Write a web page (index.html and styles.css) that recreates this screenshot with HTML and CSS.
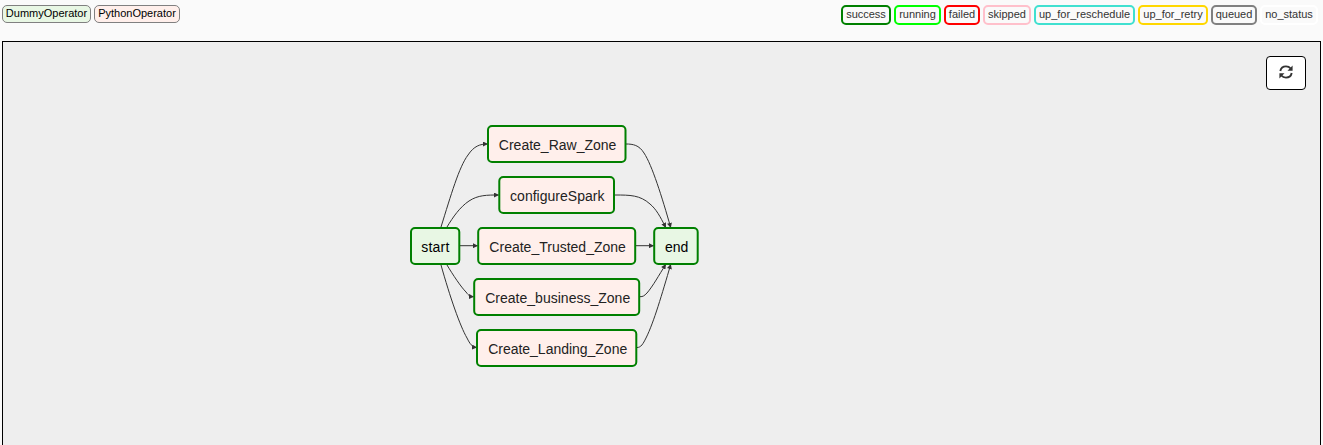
FILE: index.html
```html
<!DOCTYPE html>
<html lang="en">
<head>
<meta charset="utf-8">
<title>Graph View</title>
<link rel="stylesheet" href="styles.css">
</head>
<body>
<header class="legend">
  <div class="operators">
    <span class="operator dummy">DummyOperator</span>
    <span class="operator python">PythonOperator</span>
  </div>
  <div class="states">
    <span class="state success">success</span>
    <span class="state running">running</span>
    <span class="state failed">failed</span>
    <span class="state skipped">skipped</span>
    <span class="state reschedule">up_for_reschedule</span>
    <span class="state retry">up_for_retry</span>
    <span class="state queued">queued</span>
    <span class="state no-status">no_status</span>
  </div>
</header>
<main class="stage">
  <svg class="graph" width="1317" height="403" viewBox="3 42 1317 403">
    <defs>
      <marker id="arrow" viewBox="0 0 10 10" refX="9" refY="5" markerUnits="userSpaceOnUse" markerWidth="5.6" markerHeight="5" orient="auto">
        <path class="arrowhead" d="M0 0L10 5L0 10z"/>
      </marker>
    </defs>
    <g class="edges">
      <path d="M441 227C451 195 459 167 468 155C474 146 480 144 487.500 144"/>
      <path d="M447 227C453 217 460 207 469 201C478 195 487 195 498.500 195"/>
      <path d="M460 245.700H477.500"/>
      <path d="M447 265C453 275 461 287 466 292C469 296 470 296.500 473.500 296.700"/>
      <path d="M441 265C450 297 460 326 467 338C470 344 472 347 476.500 347.500"/>
      <path d="M626 144C633 144 639 145 644 153C652 165 662 197 670.700 227.500"/>
      <path d="M615 195C630 195 640 195 650 204C656 209 660 216 665.700 227.500"/>
      <path d="M636 245.700H653.500"/>
      <path d="M640 296.700C643 296.700 644 296 647 293C653 286 659 275 665.700 264.500"/>
      <path d="M637 347.500C641 347.500 643 344 646 338C654 322 662 294 670.700 264.500"/>
    </g>
    <g class="node dummy-node">
      <rect x="411" y="228" width="48.300" height="36" rx="4"/>
      <text x="435.300" y="252" textLength="28">start</text>
    </g>
    <g class="node">
      <rect x="488" y="126" width="137.500" height="36" rx="4"/>
      <text x="557.600" y="150" textLength="117.500">Create_Raw_Zone</text>
    </g>
    <g class="node">
      <rect x="499.300" y="177" width="114.700" height="36" rx="4"/>
      <text x="557.300" y="201" textLength="94.500">configureSpark</text>
    </g>
    <g class="node">
      <rect x="478.200" y="228" width="157" height="36" rx="4"/>
      <text x="557.600" y="252" textLength="136.500">Create_Trusted_Zone</text>
    </g>
    <g class="node">
      <rect x="474.200" y="279" width="165" height="36" rx="4"/>
      <text x="557.700" y="303" textLength="145">Create_business_Zone</text>
    </g>
    <g class="node">
      <rect x="477" y="330" width="159.300" height="36" rx="4"/>
      <text x="557.700" y="354" textLength="139">Create_Landing_Zone</text>
    </g>
    <g class="node dummy-node">
      <rect x="654.200" y="228" width="43.500" height="36" rx="4"/>
      <text x="676.700" y="252" textLength="23.200">end</text>
    </g>
  </svg>
  <button class="refresh" aria-label="Refresh">
    <svg class="refresh-icon" width="14" height="14" viewBox="0 0 14 14">
      <path class="arc" d="M1.300 6C1.900 3.100 4 1.400 7 1.400C9 1.400 10.600 2.200 11.700 3.500M12.700 8C12.100 10.900 10 12.600 7 12.600C5 12.600 3.400 11.800 2.300 10.500"/>
      <path class="tip" d="M13.600 .6V5.700H8.500zM.4 13.400V8.300H5.500z"/>
    </svg>
  </button>
</main>
</body>
</html>
```
FILE: styles.css
```css
* {
  box-sizing: border-box;
}

body {
  margin: 0;
  height: 445px;
  overflow: hidden;
  background: #fafafa;
  font-family: "Liberation Sans", Arial, sans-serif;
}

.legend {
  display: flex;
  justify-content: space-between;
  align-items: flex-start;
  height: 41px;
  padding: 5px 5px 0 2px;
  font-size: 11px;
  white-space: nowrap;
}

.operators,
.states {
  display: flex;
  gap: 3px;
}

.operator {
  display: flex;
  justify-content: center;
  height: 18px;
  border: 1px solid #808080;
  border-radius: 5px;
  line-height: 14px;
  color: #000;
}

.dummy { width: 89px; background: #e8f7e4; }
.python { width: 86px; background: #ffefeb; }

.state {
  display: flex;
  justify-content: center;
  height: 20px;
  border: 2px solid;
  border-radius: 5px;
  background: #fafafa;
  line-height: 14px;
  color: #333;
}

.success { width: 50px; border-color: green; }
.running { width: 47px; border-color: lime; }
.failed { width: 36px; border-color: red; }
.skipped { width: 48px; border-color: pink; }
.reschedule { width: 101px; border-color: turquoise; }
.retry { width: 70px; border-color: gold; }
.queued { width: 46px; border-color: gray; }
.no-status { width: 58px; border-color: white; }

.stage {
  position: relative;
  width: 1319px;
  height: 404px;
  margin-left: 2px;
  border: 1px solid #000;
  border-bottom: 0;
  background: #eee;
}

.graph {
  display: block;
}

.edges path {
  fill: none;
  stroke: #333;
  stroke-width: 1;
  marker-end: url(#arrow);
}

.edges .arrowhead,
.arrowhead {
  fill: #333;
}

.node rect {
  fill: #ffefeb;
  stroke: green;
  stroke-width: 2;
}

.dummy-node rect {
  fill: #e8f7e4;
}

.node text {
  font-size: 14px;
  fill: #222;
  text-anchor: middle;
}

.dummy-node text {
  fill: #000;
}

.refresh {
  position: absolute;
  top: 14px;
  right: 14px;
  display: flex;
  align-items: center;
  justify-content: center;
  width: 40px;
  height: 34px;
  padding: 0 0 2px;
  border: 1px solid #000;
  border-radius: 4px;
  background: #fff;
}

.arc {
  fill: none;
  stroke: #333;
  stroke-width: 1.900;
}

.tip {
  fill: #333;
}
```
